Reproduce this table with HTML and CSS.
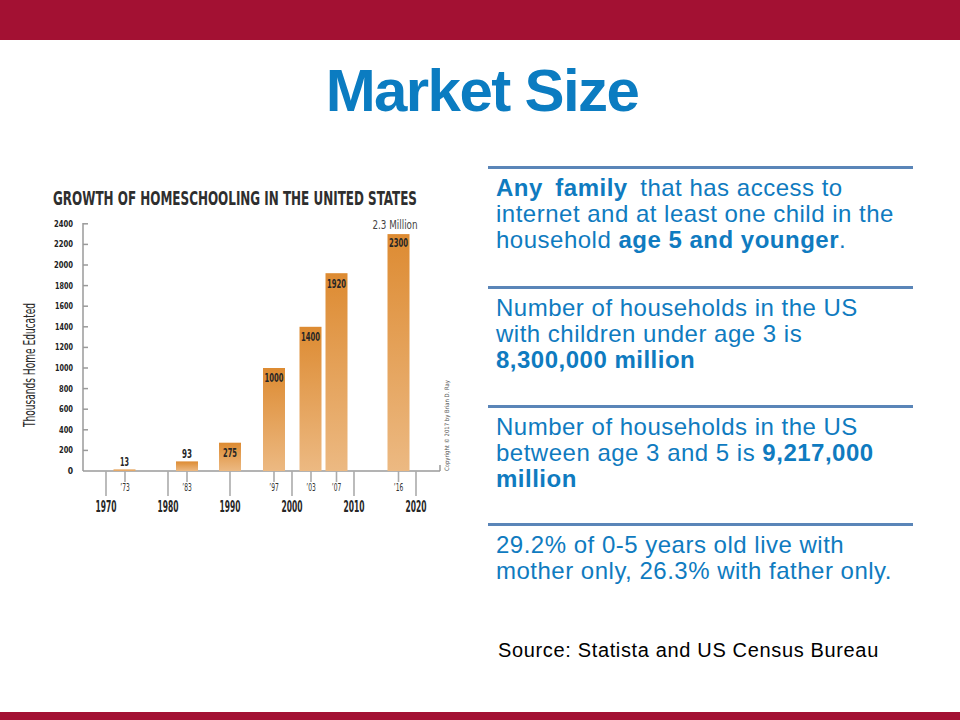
FILE: index.html
```html
<!DOCTYPE html>
<html lang="en">
<head>
<meta charset="utf-8">
<title>Market Size</title>
<link rel="stylesheet" href="styles.css">
</head>
<body>
<div class="topbar"></div>
<h1 class="title">Market Size</h1>
<div class="main">
  <svg class="chart" width="450" height="340" viewBox="20 180 450 340" xmlns="http://www.w3.org/2000/svg">
    <defs>
      <linearGradient id="barg" x1="0" y1="0" x2="0" y2="1">
        <stop offset="0" stop-color="#dd8b32"/>
        <stop offset="1" stop-color="#ecb982"/>
      </linearGradient>
    </defs>
    <text class="ch-title" x="53" y="205" textLength="364" lengthAdjust="spacingAndGlyphs">GROWTH OF HOMESCHOOLING IN THE UNITED STATES</text>

    <!-- axes -->
    <g class="axis">
      <line x1="83" y1="223" x2="83" y2="471"/>
      <line x1="83" y1="471" x2="440" y2="471"/>
      <line x1="440" y1="465" x2="440" y2="471"/>
      <line x1="83" y1="223.8" x2="88" y2="223.8"/>
      <line x1="83" y1="244.4" x2="88" y2="244.4"/>
      <line x1="83" y1="265" x2="88" y2="265"/>
      <line x1="83" y1="285.6" x2="88" y2="285.6"/>
      <line x1="83" y1="306.2" x2="88" y2="306.2"/>
      <line x1="83" y1="326.8" x2="88" y2="326.8"/>
      <line x1="83" y1="347.4" x2="88" y2="347.4"/>
      <line x1="83" y1="368" x2="88" y2="368"/>
      <line x1="83" y1="388.6" x2="88" y2="388.6"/>
      <line x1="83" y1="409.2" x2="88" y2="409.2"/>
      <line x1="83" y1="429.8" x2="88" y2="429.8"/>
      <line x1="83" y1="450.4" x2="88" y2="450.4"/>
    </g>
    <g class="ylab">
      <text x="73" y="226.8" textLength="19" lengthAdjust="spacingAndGlyphs">2400</text>
      <text x="73" y="247.4" textLength="19" lengthAdjust="spacingAndGlyphs">2200</text>
      <text x="73" y="268" textLength="19" lengthAdjust="spacingAndGlyphs">2000</text>
      <text x="73" y="288.6" textLength="18" lengthAdjust="spacingAndGlyphs">1800</text>
      <text x="73" y="309.2" textLength="18" lengthAdjust="spacingAndGlyphs">1600</text>
      <text x="73" y="329.8" textLength="18" lengthAdjust="spacingAndGlyphs">1400</text>
      <text x="73" y="350.4" textLength="18" lengthAdjust="spacingAndGlyphs">1200</text>
      <text x="73" y="371" textLength="18" lengthAdjust="spacingAndGlyphs">1000</text>
      <text x="73" y="391.6" textLength="14" lengthAdjust="spacingAndGlyphs">800</text>
      <text x="73" y="412.2" textLength="14" lengthAdjust="spacingAndGlyphs">600</text>
      <text x="73" y="432.8" textLength="14" lengthAdjust="spacingAndGlyphs">400</text>
      <text x="73" y="453.4" textLength="14" lengthAdjust="spacingAndGlyphs">200</text>
      <text x="73" y="474">0</text>
    </g>

    <!-- decade lines and year ticks -->
    <g class="grid">
      <line x1="106" y1="471" x2="106" y2="496"/>
      <line x1="168" y1="471" x2="168" y2="496"/>
      <line x1="230" y1="471" x2="230" y2="496"/>
      <line x1="292" y1="471" x2="292" y2="496"/>
      <line x1="354" y1="471" x2="354" y2="496"/>
      <line x1="416" y1="471" x2="416" y2="496"/>
      <line x1="125" y1="471" x2="125" y2="482"/>
      <line x1="187" y1="471" x2="187" y2="482"/>
      <line x1="274" y1="471" x2="274" y2="482"/>
      <line x1="311" y1="471" x2="311" y2="482"/>
      <line x1="336.5" y1="471" x2="336.5" y2="482"/>
      <line x1="398.5" y1="471" x2="398.5" y2="482"/>
    </g>
    <g class="decade">
      <text x="106" y="512" textLength="21" lengthAdjust="spacingAndGlyphs">1970</text>
      <text x="168" y="512" textLength="21" lengthAdjust="spacingAndGlyphs">1980</text>
      <text x="230" y="512" textLength="21" lengthAdjust="spacingAndGlyphs">1990</text>
      <text x="292" y="512" textLength="21" lengthAdjust="spacingAndGlyphs">2000</text>
      <text x="354" y="512" textLength="21" lengthAdjust="spacingAndGlyphs">2010</text>
      <text x="416" y="512" textLength="21" lengthAdjust="spacingAndGlyphs">2020</text>
    </g>
    <g class="yr">
      <text x="125" y="490.5" textLength="9.5" lengthAdjust="spacingAndGlyphs">’73</text>
      <text x="187" y="490.5" textLength="9.5" lengthAdjust="spacingAndGlyphs">’83</text>
      <text x="274" y="490.5" textLength="9.5" lengthAdjust="spacingAndGlyphs">’97</text>
      <text x="311" y="490.5" textLength="9.5" lengthAdjust="spacingAndGlyphs">’03</text>
      <text x="336.5" y="490.5" textLength="9.5" lengthAdjust="spacingAndGlyphs">’07</text>
      <text x="398.5" y="490.5" textLength="9.5" lengthAdjust="spacingAndGlyphs">’16</text>
    </g>

    <!-- bars -->
    <g fill="url(#barg)">
      <rect x="113.5" y="469.5" width="22" height="1.5"/>
      <rect x="176" y="461.4" width="22" height="9.6"/>
      <rect x="219" y="442.7" width="22" height="28.3"/>
      <rect x="263" y="368" width="22" height="103"/>
      <rect x="299.5" y="326.8" width="22" height="144.2"/>
      <rect x="325.5" y="273.2" width="22" height="197.8"/>
      <rect x="387.5" y="234.1" width="22" height="236.9"/>
    </g>
    <g class="val">
      <text x="124.5" y="466" textLength="9" lengthAdjust="spacingAndGlyphs">13</text>
      <text x="187" y="458" textLength="10" lengthAdjust="spacingAndGlyphs">93</text>
      <text x="230" y="456.5" textLength="14" lengthAdjust="spacingAndGlyphs">275</text>
      <text x="274" y="382" textLength="19" lengthAdjust="spacingAndGlyphs">1000</text>
      <text x="310.5" y="341" textLength="19" lengthAdjust="spacingAndGlyphs">1400</text>
      <text x="336.5" y="287.5" textLength="19" lengthAdjust="spacingAndGlyphs">1920</text>
      <text x="398.5" y="246.5" textLength="19" lengthAdjust="spacingAndGlyphs">2300</text>
    </g>
    <text class="million" x="372.5" y="228.5" textLength="45" lengthAdjust="spacingAndGlyphs">2.3 Million</text>
    <text class="ytitle" x="35" y="365" transform="rotate(-90 35 365)" textLength="124" lengthAdjust="spacingAndGlyphs">Thousands Home Educated</text>
    <text class="copy" x="449" y="471" transform="rotate(-90 449 471)" textLength="91" lengthAdjust="spacingAndGlyphs">Copyright © 2017 by Brian D. Ray</text>
  </svg>

  <div class="facts">
    <div class="fact"><b>Any&#8194;</b><b>family&#8194;</b><span>that has access to</span><br>internet and at least one child in the<br>household <b>age 5 and younger</b>.</div>
    <div class="fact">Number of households in the US<br>with children under age 3 is<br><b>8,300,000 million</b></div>
    <div class="fact">Number of households in the US<br>between age 3 and 5 is <b>9,217,000</b><br><b>million</b></div>
    <div class="fact">29.2% of 0-5 years old live with<br>mother only, 26.3% with father only.</div>
    <p class="source">Source: Statista and US Census Bureau</p>
  </div>
</div>
<div class="footbar"></div>
</body>
</html>
```

FILE: styles.css
```css
html, body {
  margin: 0;
  padding: 0;
}

body {
  width: 960px;
  height: 720px;
  overflow: hidden;
  background: #ffffff;
  font-family: "Liberation Sans", Arial, sans-serif;
  display: flex;
  flex-direction: column;
}

.topbar {
  height: 40px;
  flex: none;
  background: #a31133;
}

.title {
  margin: 21px 0 0;
  height: 60px;
  font-size: 60px;
  line-height: 60px;
  font-weight: 700;
  letter-spacing: -1.6px;
  color: #0b7cc1;
  text-align: center;
  padding-left: 4px;
}

.main {
  display: flex;
  align-items: flex-start;
  margin-top: 45px;
}

.chart {
  flex: none;
  display: block;
  overflow: visible;
  margin: 14px 0 0 20px;
}

/* chart typography */
.chart text {
  font-family: "Liberation Sans Narrow", "DejaVu Sans Condensed", "Roboto", sans-serif;
  font-stretch: condensed;
}

.ch-title {
  font-size: 19.5px;
  font-weight: 600;
  fill: #2e2e2e;
}

.axis line {
  stroke: #9a9a9a;
  stroke-width: 1.5;
}

.grid line {
  stroke: #ababab;
  stroke-width: 1.6;
}

.ylab text {
  font-size: 8.5px;
  font-weight: 700;
  fill: #222222;
  text-anchor: end;
}

.decade text {
  font-size: 15.5px;
  font-weight: 600;
  fill: #262626;
  text-anchor: middle;
}

.yr text {
  font-size: 10.5px;
  fill: #333333;
  text-anchor: middle;
}

.val text {
  font-size: 12px;
  font-weight: 600;
  fill: #262626;
  text-anchor: middle;
}

.million {
  font-size: 12px;
  fill: #444444;
}

.ytitle {
  font-size: 16px;
  fill: #262626;
  text-anchor: middle;
}

.copy {
  font-size: 6px;
  fill: #555555;
}

/* right column */
.facts {
  flex: none;
  width: 425px;
  margin-left: 18px;
}

.fact {
  box-sizing: border-box;
  border-top: 3px solid #5a85b8;
  padding: 6px 0 0 8px;
  font-size: 24px;
  line-height: 26px;
  letter-spacing: 0.5px;
  color: #0f7bc0;
  white-space: nowrap;
}

.fact b {
  font-weight: 700;
}

.fact:nth-child(1) { height: 120px; }
.fact:nth-child(2) { height: 119px; }
.fact:nth-child(3) { height: 118px; }
.fact:nth-child(4) { height: 115px; }

.source {
  margin: 0;
  padding-left: 10px;
  font-size: 20px;
  line-height: 24px;
  letter-spacing: 0.65px;
  color: #000000;
  white-space: nowrap;
}

.footbar {
  margin-top: auto;
  height: 8px;
  flex: none;
  background: #a31133;
}
```
